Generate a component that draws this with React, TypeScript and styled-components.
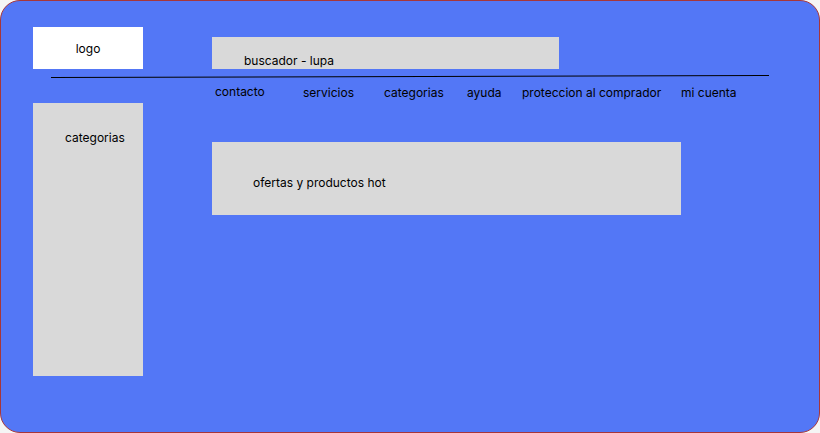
import styled, { createGlobalStyle } from 'styled-components';

const GlobalStyle = createGlobalStyle`
  html, body {
    margin: 0;
    padding: 0;
    background: #f5f5f5;
  }
  * {
    box-sizing: border-box;
  }
`;

const navItems = [
  { label: 'contacto', raise: true },
  { label: 'servicios', raise: false },
  { label: 'categorias', raise: false },
  { label: 'ayuda', raise: false },
  { label: 'proteccion al comprador', raise: false },
  { label: 'mi cuenta', raise: false },
];

const App = () => {
  return (
    <>
      <GlobalStyle />
      <Frame>
        <TopRow>
          <Logo>logo</Logo>
          <Search>buscador - lupa</Search>
        </TopRow>
        <Divider />
        <Body>
          <Sidebar>categorias</Sidebar>
          <Main>
            <Nav>
              {navItems.map((item) => (
                <NavItem key={item.label} raise={item.raise}>
                  {item.label}
                </NavItem>
              ))}
            </Nav>
            <Offers>ofertas y productos hot</Offers>
          </Main>
        </Body>
      </Frame>
    </>
  );
};

export default App;

const Frame = styled.div`
  width: 820px;
  height: 433px;
  background: #5377f6;
  border: 1px solid #a8363a;
  border-radius: 20px;
  padding: 26px 0 0 32px;
  font-family: Inter, 'Liberation Sans', sans-serif;
  font-size: 12px;
  line-height: 16px;
  color: #000;
  overflow: hidden;
`;

const TopRow = styled.div`
  display: flex;
  align-items: flex-start;
  gap: 69px;
`;

const Logo = styled.div`
  width: 110px;
  height: 42px;
  padding-top: 1px;
  background: #ffffff;
  display: flex;
  align-items: center;
  justify-content: center;
`;

const Search = styled.div`
  width: 347px;
  height: 32px;
  margin-top: 10px;
  background: #d9d9d9;
  padding: 16px 0 0 32px;
`;

const Divider = styled.div`
  width: 718px;
  height: 1px;
  margin: 7px 0 0 18px;
  background: #000;
  transform: rotate(-0.16deg);
`;

const Body = styled.div`
  display: grid;
  grid-template-columns: 110px 1fr;
  column-gap: 69px;
`;

const Sidebar = styled.div`
  height: 273px;
  margin-top: 26px;
  background: #d9d9d9;
  padding: 27px 0 0 32px;
`;

const Main = styled.div`
  display: flex;
  flex-direction: column;
`;

const Nav = styled.div`
  display: grid;
  grid-template-columns: 88px 81px 83px 55px 159px auto;
  margin-top: 8px;
  padding-left: 3px;
`;

const NavItem = styled.span<{ raise: boolean }>`
  white-space: nowrap;
  margin-top: ${({ raise }) => (raise ? '-1px' : '0')};
`;

const Offers = styled.div`
  width: 469px;
  height: 73px;
  margin-top: 41px;
  background: #d9d9d9;
  padding: 33px 0 0 41px;
`;
